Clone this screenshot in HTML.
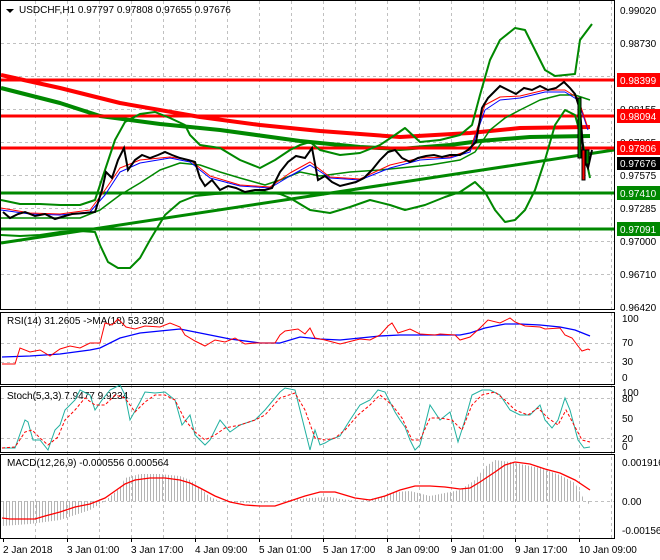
<!DOCTYPE html>
<html><head><meta charset="utf-8"><style>
body{margin:0;background:#fff;}
svg{display:block;font-family:"Liberation Sans",sans-serif;font-size:10px;}
</style></head><body>
<svg width="660" height="560" viewBox="0 0 660 560" xmlns="http://www.w3.org/2000/svg">
<defs>
<pattern id="hist" width="3" height="10" patternUnits="userSpaceOnUse"><rect x="0" y="0" width="1" height="10" fill="#b4b4b4"/></pattern>
</defs>
<rect width="660" height="560" fill="#fff"/>
<!-- vertical grid -->
<g stroke="#c0c0c0" stroke-dasharray="3,3" stroke-width="1">
<path d="M35.5 1V538M67.5 1V538M99.5 1V538M131.5 1V538M163.5 1V538M195.5 1V538M227.5 1V538M259.5 1V538M291.5 1V538M323.5 1V538M355.5 1V538M387.5 1V538M419.5 1V538M451.5 1V538M483.5 1V538M515.5 1V538M547.5 1V538M579.5 1V538M611.5 1V538"/>
<path d="M1 43.5H614M1 76.5H614M1 109.5H614M1 142.5H614M1 175.5H614M1 208.5H614M1 241.5H614M1 274.5H614"/>
<path d="M1 343.5H614M1 362.5H614M1 398.5H614M1 438.5H614M1 501.5H614"/>
</g>
<!-- pane borders -->
<g fill="none" stroke="#000" stroke-width="1">
<rect x="0.5" y="0.5" width="614" height="309"/>
<rect x="0.5" y="312.5" width="614" height="72"/>
<rect x="0.5" y="386.5" width="614" height="66"/>
<rect x="0.5" y="454.5" width="614" height="84"/>
</g>
<!-- MAIN PANE -->
<g fill="none" stroke-linejoin="round">
<!-- MA200 red thick -->
<polyline stroke="#f00" stroke-width="4" points="1,75 60,88 120,103 200,117 260,125 320,131 400,137 470,133 520,128 590,127"/>
<!-- green MA thick -->
<polyline stroke="#080" stroke-width="4" points="1,88 60,103 100,116 160,124 220,130 300,141 360,147 400,149 450,145 480,141 530,137 590,136"/>
<!-- trendlines -->
<polyline stroke="#080" stroke-width="3" points="1,243 614,150"/>
<polyline stroke="#080" stroke-width="3" points="1,218 100,214 170,196 240,180 300,172 390,160 470,152 614,150" opacity="0"/>
<!-- horizontal levels -->
<g stroke-width="3">
<line x1="1" y1="80" x2="614" y2="80" stroke="#f00"/>
<line x1="1" y1="116" x2="614" y2="116" stroke="#f00"/>
<line x1="1" y1="148" x2="614" y2="148" stroke="#f00"/>
<line x1="1" y1="193" x2="614" y2="193" stroke="#080"/>
<line x1="1" y1="229" x2="614" y2="229" stroke="#080"/>
</g>
<!-- bollinger -->
<g stroke="#080" stroke-width="2">
<polyline points="1,200 20,204 40,204 60,205 80,205 95,200 105,170 115,140 125,122 140,114 155,112 170,118 185,125 190,135 200,145 220,148 240,160 260,168 275,160 290,150 300,145 310,142 320,150 340,155 360,153 380,145 395,135 405,128 420,142 440,140 460,135 472,125 480,95 490,60 500,40 515,28 525,30 535,50 545,70 555,76 575,74 580,40 592,24"/>
<polyline points="1,235 20,236 40,235 60,232 80,231 95,232 100,245 108,262 118,268 130,268 140,258 150,240 165,215 180,202 195,196 215,194 240,193 265,192 280,194 290,198 310,210 330,213 350,207 370,200 390,205 405,210 425,205 445,197 460,192 475,182 485,192 495,210 505,222 515,220 525,210 535,190 545,160 555,125 565,110 575,115 582,140 590,178"/>
<polyline points="1,218 40,218 80,218 100,210 120,195 140,183 160,170 180,163 200,165 220,172 240,178 265,185 280,180 300,172 320,176 350,172 380,170 400,168 430,165 460,160 475,152 490,130 505,118 520,110 540,100 560,95 575,95 590,100" stroke-width="1.5"/>
</g>
<!-- EMAs -->
<polyline stroke="#00f" stroke-width="1" points="1,210 30,214 60,215 90,212 105,195 120,172 140,163 170,158 190,162 210,178 240,186 270,188 290,176 310,165 330,178 360,180 390,168 420,160 450,158 470,152 485,110 500,100 520,98 545,92 565,92 578,100 588,130"/>
<polyline stroke="#f00" stroke-width="1" points="1,208 30,213 60,214 90,210 105,190 120,168 140,160 170,157 190,160 210,176 240,185 270,187 290,173 310,162 330,177 360,179 390,165 420,158 450,157 470,150 485,105 500,97 520,96 545,90 565,90 578,98 588,128"/>
</g>
<!-- price candles approx -->
<g stroke="#000" stroke-width="1">
<polyline fill="none" stroke="#000" stroke-width="2" points="3,212 10,218 18,214 25,212 35,216 45,214 55,219 65,216 72,214 85,213 95,212 102,190 106,172 112,178 118,160 124,148 128,170 135,160 142,155 150,158 158,155 165,152 172,155 180,158 188,160 195,162 200,178 205,186 212,180 220,190 228,186 236,188 245,192 255,190 265,190 272,188 280,172 288,162 296,156 305,158 312,148 318,180 325,176 332,182 340,186 348,184 356,182 364,178 372,170 380,160 388,152 395,150 402,158 410,162 418,158 426,156 434,155 442,157 450,155 460,155 468,150 476,142 482,108 488,98 494,92 500,86 508,90 516,94 524,88 532,90 540,86 548,90 556,88 564,82 570,88 575,94 580,110 584,160 588,168 592,150"/>
<g fill="#080"><rect x="578" y="98" width="3" height="60"/><rect x="586" y="150" width="3" height="14"/></g>
<g fill="#f00"><rect x="582" y="150" width="3" height="30"/></g>
</g>
<!-- title -->
<path d="M6 9h8l-4 4z" fill="#000"/>
<text x="19" y="13" fill="#000">USDCHF,H1  0.97797 0.97808 0.97655 0.97676</text>
<!-- price axis -->
<g fill="#000">
<text x="620" y="14">0.99020</text>
<text x="620" y="47">0.98730</text>
<text x="620" y="80">0.98445</text>
<text x="620" y="113">0.98155</text>
<text x="620" y="146">0.97865</text>
<text x="620" y="179">0.97575</text>
<text x="620" y="212">0.97285</text>
<text x="620" y="245">0.97000</text>
<text x="620" y="278">0.96710</text>
<text x="620" y="311">0.96420</text>
</g>
<g font-size="10">
<rect x="617" y="73" width="43" height="14" fill="#f00"/><text x="620" y="84" fill="#fff">0.98399</text>
<rect x="617" y="109" width="43" height="14" fill="#f00"/><text x="620" y="120" fill="#fff">0.98094</text>
<rect x="617" y="141" width="43" height="14" fill="#f00"/><text x="620" y="152" fill="#fff">0.97806</text>
<rect x="617" y="157" width="43" height="13" fill="#000"/><text x="620" y="167" fill="#fff">0.97676</text>
<rect x="617" y="186" width="43" height="14" fill="#080"/><text x="620" y="197" fill="#fff">0.97410</text>
<rect x="617" y="222" width="43" height="14" fill="#080"/><text x="620" y="233" fill="#fff">0.97091</text>
</g>
<!-- RSI -->
<text x="7" y="324">RSI(14) 31.2605  -&gt;MA(18) 53.3280</text>
<polyline fill="none" stroke="#00f" stroke-width="1.3" points="2,379 30,378 60,376 90,372 100,370 120,360 140,355 160,353 180,351 200,355 230,361 260,365 280,365 300,359 320,361 340,362 360,360 380,358 400,357 430,357 460,357 470,355 485,350 505,346 520,346 540,347 560,349 575,352 590,358" transform="translate(0,-22)"/>
<polyline fill="none" stroke="#f00" stroke-width="1" points="2,386 15,386 20,370 30,374 40,372 50,378 60,371 70,368 80,370 90,365 100,365 105,345 112,347 118,341 126,349 135,351 145,348 160,349 170,345 180,349 185,357 195,363 205,368 215,362 225,364 235,360 245,366 255,365 275,365 280,357 285,353 298,351 305,356 310,350 315,360 325,362 340,366 360,361 370,362 380,357 388,348 392,345 398,355 410,351 420,356 435,357 440,356 455,357 460,362 470,359 480,350 488,342 500,345 510,340 515,344 525,348 540,349 545,351 560,350 565,357 572,360 578,368 582,373 588,371 590,372" transform="translate(0,-22)"/>
<g fill="#000"><text x="622" y="322">100</text><text x="622" y="346">70</text><text x="622" y="365">30</text><text x="622" y="381">0</text></g>
<!-- Stoch -->
<text x="7" y="399">Stoch(5,3,3) 7.9477 9.9234</text>
<polyline fill="none" stroke="#20b0a0" stroke-width="1" points="2,448 15,448 25,420 28,422 33,440 40,440 48,450 55,430 60,425 65,410 75,400 80,390 90,395 95,410 102,400 110,390 120,385 125,395 130,420 140,402 145,392 155,393 165,392 175,400 182,425 190,415 195,435 205,445 210,440 220,420 230,432 240,425 255,420 265,410 280,392 285,388 295,390 300,410 310,450 315,430 320,445 325,443 330,440 340,436 350,420 360,405 370,400 378,390 385,392 395,412 400,420 405,427 410,440 415,450 420,445 430,405 440,420 450,412 458,442 465,420 472,395 482,390 490,390 500,395 510,410 520,415 530,415 540,405 545,420 552,428 558,420 565,398 570,410 578,440 584,448 590,447"/>
<polyline fill="none" stroke="#f00" stroke-width="1" stroke-dasharray="3,2" points="2,448 15,447 25,432 32,430 40,438 48,445 58,437 65,420 75,410 85,398 95,405 105,405 115,395 125,398 135,412 145,402 155,395 165,395 175,400 185,420 195,432 205,440 215,435 225,428 240,425 255,420 265,415 280,398 295,393 305,410 315,438 325,440 335,438 345,430 358,415 370,405 380,395 392,405 402,418 412,440 420,440 430,418 440,418 452,420 462,430 472,405 482,395 495,392 505,400 515,410 528,415 538,408 548,418 558,425 566,410 574,425 582,440 590,442" transform="translate(0,0)"/>
<g fill="#000"><text x="622" y="396">100</text><text x="622" y="402">80</text><text x="622" y="422">50</text><text x="622" y="442">20</text><text x="622" y="450">0</text></g>
<!-- MACD -->
<text x="7" y="466">MACD(12,26,9) -0.000556 0.000564</text>
<polygon fill="url(#hist)" points="2,501 2,526 30,524 60,520 90,510 105,501 120,488 125,478 140,474 160,474 180,476 190,480 200,488 210,497 220,501 225,502 260,503 290,500 310,498 330,497 340,499 360,501 380,497 395,492 410,491 430,496 460,490 475,480 485,467 495,460 510,462 540,468 560,475 575,483 585,501 590,505 590,501"/>
<polyline fill="none" stroke="#f00" stroke-width="1.3" points="2,490 10,491 35,491 45,488 60,484 75,479 90,476 105,470 115,463 125,456 135,452 150,450 165,450 180,452 190,455 200,460 215,468 230,474 245,477 260,478 275,478 290,473 305,468 320,464 335,464 345,467 355,470 370,472 385,468 400,462 415,458 430,458 445,459 460,461 470,460 480,454 495,444 505,437 515,434 530,436 545,441 560,445 575,452 590,462" transform="translate(0,28)"/>
<g fill="#000"><text x="622" y="466">0.001916</text><text x="622" y="505">0.00</text><text x="622" y="534">-0.001564</text></g>
<!-- time axis -->
<g stroke="#000"><path d="M3.5 538v4M67.5 538v4M131.5 538v4M195.5 538v4M259.5 538v4M323.5 538v4M387.5 538v4M451.5 538v4M515.5 538v4M579.5 538v4"/></g>
<g fill="#000">
<text x="3" y="553">2 Jan 2018</text>
<text x="67" y="553">3 Jan 01:00</text>
<text x="131" y="553">3 Jan 17:00</text>
<text x="195" y="553">4 Jan 09:00</text>
<text x="259" y="553">5 Jan 01:00</text>
<text x="323" y="553">5 Jan 17:00</text>
<text x="387" y="553">8 Jan 09:00</text>
<text x="451" y="553">9 Jan 01:00</text>
<text x="515" y="553">9 Jan 17:00</text>
<text x="579" y="553">10 Jan 09:00</text>
</g>
</svg>
</body></html>
